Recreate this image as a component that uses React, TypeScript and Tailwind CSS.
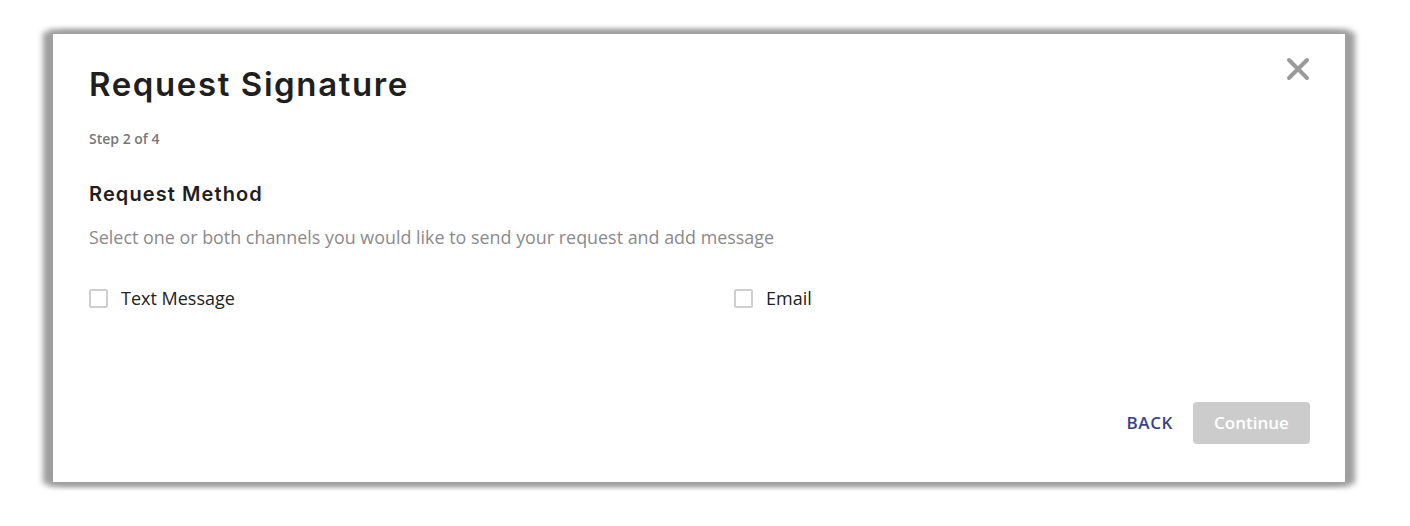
const CheckOption = ({ label }: { label: string }) => (
  <label className="flex items-center gap-[13px] cursor-pointer">
    <span className="inline-block h-[19px] w-[19px] rounded-[2px] border-2 border-[#cfcfcf] bg-white" />
    <span className="text-[18px] leading-6 text-[#222]">{label}</span>
  </label>
)

export default function App() {
  return (
    <div className="min-h-[526px] w-full bg-white pt-[34px] pl-[53px] font-['Open_Sans',sans-serif]">
      <div className="relative flex h-[448px] w-[1292px] flex-col bg-white pl-[36px] pr-[35px] pt-[30px] pb-[38px] shadow-[8px_0_6px_2px_#9e9e9e,-8px_0_6px_2px_#9e9e9e,0_0_6px_4px_#9e9e9e]">
        <button type="button" className="absolute right-[35px] top-[23px] text-[#9a9a9a]" aria-label="Close">
          <svg width="24" height="24" viewBox="0 0 24 24" fill="none">
            <path d="M3 3L21 21M21 3L3 21" stroke="currentColor" strokeWidth="4" strokeLinecap="round" />
          </svg>
        </button>

        <h1 className="text-[33px] leading-10 font-semibold text-[#1f1f1f] font-['Inter',sans-serif] tracking-[1.6px]">
          Request Signature
        </h1>
        <p className="mt-[25px] text-[14px] leading-5 font-semibold text-[#777]">Step 2 of 4</p>

        <h2 className="mt-[32px] text-[20px] leading-[26px] font-semibold text-[#1f1f1f] font-['Inter',sans-serif] tracking-[1.1px]">
          Request Method
        </h2>
        <p className="mt-[18px] text-[17.9px] leading-6 text-[#8a8a8a]">
          Select one or both channels you would like to send your request and add message
        </p>

        <div className="mt-[37px] flex">
          <div className="w-[645px]">
            <CheckOption label="Text Message" />
          </div>
          <CheckOption label="Email" />
        </div>

        <div className="mt-auto flex items-center justify-end gap-[20px]">
          <button type="button" className="text-[17px] font-semibold text-[#35448a] tracking-[0.6px]">
            BACK
          </button>
          <button
            type="button"
            disabled
            className="h-[42px] w-[117px] rounded-[4px] bg-[#cccccc] text-[17px] font-semibold text-white"
          >
            Continue
          </button>
        </div>
      </div>
    </div>
  )
}
